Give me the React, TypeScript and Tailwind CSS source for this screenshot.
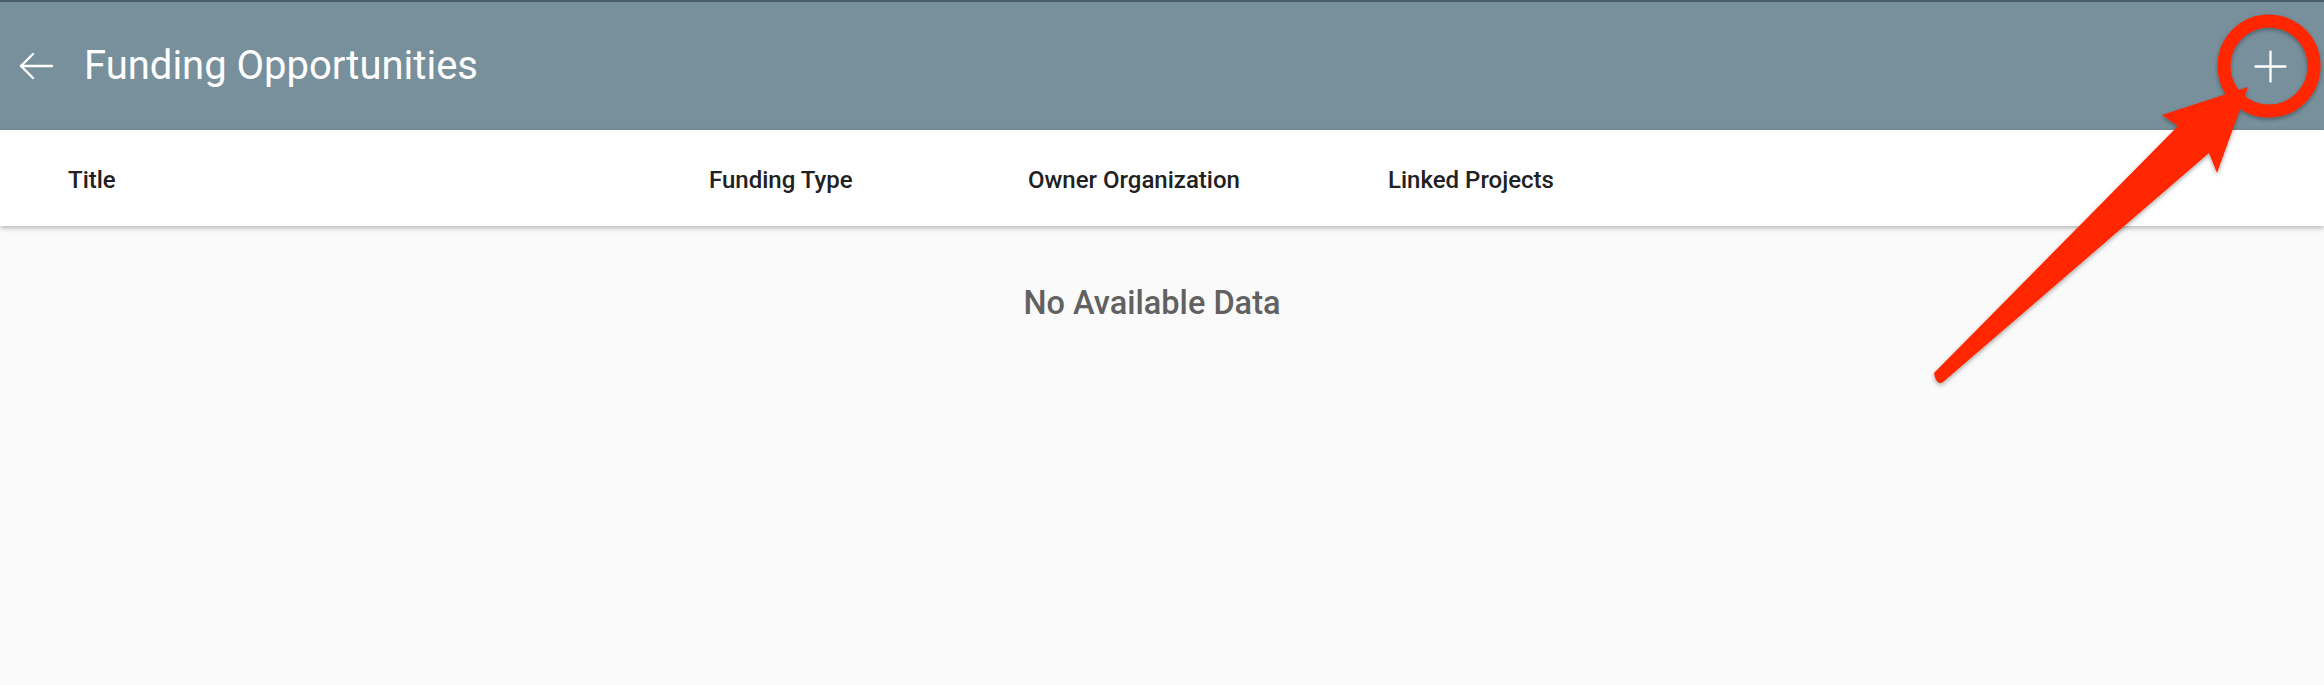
import { Plus } from "lucide-react";

const columns = [
  { label: "Title", width: "w-[641px]" },
  { label: "Funding Type", width: "w-[319px]" },
  { label: "Owner Organization", width: "w-[360px]" },
  { label: "Linked Projects", width: "flex-1" },
];

function BackArrow() {
  return (
    <svg width="36" height="30" viewBox="0 0 36 30" fill="none" stroke="white" strokeWidth="2.4" strokeLinecap="round" strokeLinejoin="round">
      <path d="M3 15 H34" />
      <path d="M15 3 L3 15 L15 27" />
    </svg>
  );
}

// red callout drawn over the screenshot, pointing at the add button
function Callout() {
  return (
    <svg className="pointer-events-none absolute inset-0 z-20" width="2324" height="685" viewBox="0 0 2324 685">
      <defs>
        <filter id="sh" x="-10%" y="-10%" width="120%" height="120%">
          <feDropShadow dx="0" dy="2" stdDeviation="2" floodColor="#000" floodOpacity="0.35" />
        </filter>
      </defs>
      <g filter="url(#sh)" fill="#ff2600">
        <circle cx="2269" cy="66" r="45" fill="none" stroke="#ff2600" strokeWidth="13" />
        <path d="M1934 373 L2178 126 L2162 115 L2248 87 L2217 173 L2209 153 L1943 382 Q1936 386 1934 373 Z" />
      </g>
    </svg>
  );
}

export default function App() {
  return (
    <div className="relative flex h-[685px] w-[2324px] flex-col overflow-hidden bg-[#fafafa] font-['Roboto',sans-serif]">
      <div className="flex h-[130px] items-center border-t-2 border-[#4a5d68] bg-[#78909c] pl-[18px] pr-[28px]">
        <BackArrow />
        <div className="ml-[30px] text-[40px] leading-none text-white">Funding Opportunities</div>
        <button className="ml-auto text-white">
          <Plus className="h-[51px] w-[51px]" strokeWidth={1.1} />
        </button>
      </div>

      <div className="relative z-10 flex h-[96px] items-center bg-white pl-[68px] pt-[4px] shadow-[0_2px_5px_rgba(0,0,0,0.28)]">
        {columns.map(c => (
          <div key={c.label} className={`${c.width} text-[24px] font-medium leading-none text-[#212121]`}>{c.label}</div>
        ))}
      </div>

      <div className="mt-[61px] pr-[20px] text-center text-[32.5px] font-medium leading-none text-[#616161]">No Available Data</div>

      <Callout />
    </div>
  );
}
